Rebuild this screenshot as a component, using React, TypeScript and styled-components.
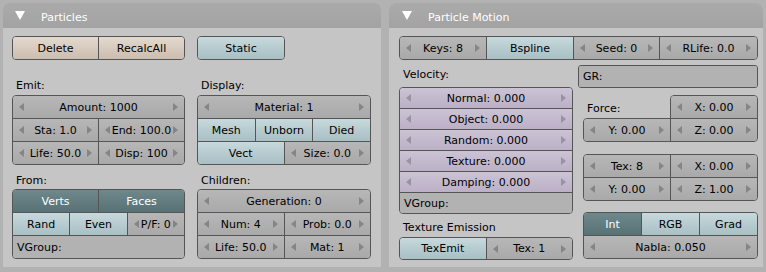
import React from 'react';
import styled, { createGlobalStyle, css } from 'styled-components';

const GlobalStyle = createGlobalStyle`
  html, body { margin: 0; padding: 0; background: #b2b2b2; }
  body {
    font-family: "DejaVu Sans", "Bitstream Vera Sans", Verdana, sans-serif;
    font-size: 11px;
    color: #000;
  }
  * { box-sizing: border-box; }
`;

const Page = styled.div`
  display: flex;
  gap: 8px;
  padding: 3px 3px 0 3px;
  width: 766px;
  height: 272px;
`;

const Panel = styled.section<{ $w: number }>`
  width: ${p => p.$w}px;
  height: 264px;
  background: #c5c5c5;
  border-radius: 6px 6px 0 0;
  display: flex;
  flex-direction: column;
  overflow: hidden;
`;

const Header = styled.header<{ $pad: number }>`
  height: 25px;
  flex: none;
  background: linear-gradient(#aaaaaa, #a3a3a3);
  display: flex;
  align-items: center;
  gap: 16px;
  padding-left: ${p => p.$pad}px;
  color: #fff;
`;

const HeaderTitle = styled.span`
  padding-top: 3px;
`;

const Tri = () => (
  <svg width="10" height="9" viewBox="0 0 10 9">
    <polygon points="0,0 10,0 5,9" fill="#ffffff" />
  </svg>
);

const Body1 = styled.div`
  display: flex;
  gap: 12px;
  padding: 8px 10px 0 9px;
`;

const Body2 = styled.div`
  display: flex;
  flex-direction: column;
  padding: 8px 5px 0 10px;
`;

const Columns = styled.div`
  display: flex;
  gap: 5px;
`;

const Column = styled.div<{ $w: number; $pt?: number }>`
  width: ${p => p.$w}px;
  display: flex;
  flex-direction: column;
  padding-top: ${p => p.$pt ?? 0}px;
`;

const SectionLabel = styled.div<{ $h: number; $pb: number }>`
  height: ${p => p.$h}px;
  display: flex;
  align-items: flex-end;
  padding-left: 4px;
  padding-bottom: ${p => p.$pb}px;
  white-space: nowrap;
`;

const Group = styled.div<{ $w?: number; $mt?: number; $ml?: number; $radius?: string }>`
  display: flex;
  flex-direction: column;
  border: 1px solid #555555;
  border-radius: ${p => p.$radius ?? '4px'};
  overflow: hidden;
  ${p => (p.$w ? `width: ${p.$w}px;` : '')}
  margin-top: ${p => p.$mt ?? 0}px;
  margin-left: ${p => p.$ml ?? 0}px;
`;

const Row = styled.div`
  display: flex;
  & + & {
    border-top: 1px solid #555555;
  }
`;

type Variant = 'num' | 'peach' | 'toggle' | 'active' | 'lav' | 'text';

const variants: Record<Variant, ReturnType<typeof css>> = {
  num: css`background: linear-gradient(#b7b7b7, #a9a9a9);`,
  peach: css`background: linear-gradient(#e4d9ce, #cbbdaf);`,
  toggle: css`background: linear-gradient(#c7d9dd, #a8bfc3);`,
  active: css`background: linear-gradient(#6e888c, #587175); color: #fff;`,
  lav: css`background: linear-gradient(#ccc3d5, #bbb0c6);`,
  text: css`background: #b2b2b2; justify-content: flex-start; padding-left: 4px;`,
};

const Cell = styled.div<{ $v: Variant; $h: number; $w?: number }>`
  ${p => (p.$w ? `flex: 0 0 ${p.$w}px;` : 'flex: 1 1 0;')}
  min-width: 0;
  height: ${p => p.$h}px;
  display: flex;
  align-items: center;
  justify-content: center;
  white-space: nowrap;
  overflow: hidden;
  ${p => variants[p.$v]}
  & + & {
    border-left: 1px solid #555555;
  }
`;

const Arrow = styled.span<{ $dir: 'l' | 'r'; $lav?: boolean }>`
  flex: none;
  width: 0;
  height: 0;
  border-top: 4px solid transparent;
  border-bottom: 4px solid transparent;
  ${p =>
    p.$dir === 'l'
      ? `border-right: 5px solid ${p.$lav ? '#9b91a4' : '#858585'}; margin-left: 6px;`
      : `border-left: 5px solid ${p.$lav ? '#9b91a4' : '#858585'}; margin-right: 6px;`}
`;

const NumText = styled.span`
  flex: 1 1 auto;
  text-align: center;
  white-space: nowrap;
`;

const Num: React.FC<{ label: string; h?: number; w?: number; lav?: boolean }> = ({ label, h = 22, w, lav }) => (
  <Cell $v={lav ? 'lav' : 'num'} $h={h} $w={w}>
    <Arrow $dir="l" $lav={lav} />
    <NumText>{label}</NumText>
    <Arrow $dir="r" $lav={lav} />
  </Cell>
);

const Btn: React.FC<{ label: string; v: Variant; h?: number; w?: number }> = ({ label, v, h = 22, w }) => (
  <Cell $v={v} $h={h} $w={w}>
    {label}
  </Cell>
);

const ForceTop = styled.div`
  display: flex;
  margin-left: 5px;
  margin-top: 7px;
`;

const ForceLabel = styled.div`
  flex: 1;
  display: flex;
  align-items: center;
  padding-left: 4px;
  padding-top: 3px;
`;

export default function App() {
  return (
    <>
      <GlobalStyle />
      <Page>
        <Panel $w={378}>
          <Header $pad={12}>
            <Tri />
            <HeaderTitle>Particles</HeaderTitle>
          </Header>
          <Body1>
            <Column $w={173}>
              <Group>
                <Row>
                  <Btn label="Delete" v="peach" />
                  <Btn label="RecalcAll" v="peach" />
                </Row>
              </Group>
              <SectionLabel $h={35} $pb={3}>Emit:</SectionLabel>
              <Group>
                <Row>
                  <Num label="Amount: 1000" />
                </Row>
                <Row>
                  <Num label="Sta: 1.0" />
                  <Num label="End: 100.0" />
                </Row>
                <Row>
                  <Num label="Life: 50.0" />
                  <Num label="Disp: 100" />
                </Row>
              </Group>
              <SectionLabel $h={24} $pb={2}>From:</SectionLabel>
              <Group>
                <Row>
                  <Btn label="Verts" v="active" />
                  <Btn label="Faces" v="active" />
                </Row>
                <Row>
                  <Btn label="Rand" v="toggle" />
                  <Btn label="Even" v="toggle" />
                  <Num label="P/F: 0" />
                </Row>
                <Row>
                  <Btn label="VGroup:" v="text" />
                </Row>
              </Group>
            </Column>
            <Column $w={174}>
              <Group $w={88}>
                <Row>
                  <Btn label="Static" v="toggle" />
                </Row>
              </Group>
              <SectionLabel $h={35} $pb={3}>Display:</SectionLabel>
              <Group>
                <Row>
                  <Num label="Material: 1" />
                </Row>
                <Row>
                  <Btn label="Mesh" v="toggle" />
                  <Btn label="Unborn" v="toggle" />
                  <Btn label="Died" v="toggle" />
                </Row>
                <Row>
                  <Btn label="Vect" v="toggle" />
                  <Num label="Size: 0.0" />
                </Row>
              </Group>
              <SectionLabel $h={24} $pb={2}>Children:</SectionLabel>
              <Group>
                <Row>
                  <Num label="Generation: 0" />
                </Row>
                <Row>
                  <Num label="Num: 4" />
                  <Num label="Prob: 0.0" />
                </Row>
                <Row>
                  <Num label="Life: 50.0" />
                  <Num label="Mat: 1" />
                </Row>
              </Group>
            </Column>
          </Body1>
        </Panel>

        <Panel $w={374}>
          <Header $pad={13}>
            <Tri />
            <HeaderTitle>Particle Motion</HeaderTitle>
          </Header>
          <Body2>
            <Group $w={359}>
              <Row>
                <Num label="Keys: 8" w={86} />
                <Btn label="Bspline" v="toggle" w={87} />
                <Num label="Seed: 0" w={86} />
                <Num label="RLife: 0.0" />
              </Row>
            </Group>
            <Columns>
              <Column $w={174}>
                <SectionLabel $h={27} $pb={6}>Velocity:</SectionLabel>
                <Group>
                  <Row><Num lav h={20} label="Normal: 0.000" /></Row>
                  <Row><Num lav h={20} label="Object: 0.000" /></Row>
                  <Row><Num lav h={20} label="Random: 0.000" /></Row>
                  <Row><Num lav h={20} label="Texture: 0.000" /></Row>
                  <Row><Num lav h={20} label="Damping: 0.000" /></Row>
                  <Row><Btn label="VGroup:" v="text" h={20} /></Row>
                </Group>
                <SectionLabel $h={23} $pb={3}>Texture Emission</SectionLabel>
                <Group>
                  <Row>
                    <Btn label="TexEmit" v="toggle" h={21} />
                    <Num label="Tex: 1" h={21} />
                  </Row>
                </Group>
              </Column>
              <Column $w={180} $pt={5}>
                <Group $radius="3px">
                  <Row>
                    <Btn label="GR:" v="text" h={21} />
                  </Row>
                </Group>
                <ForceTop>
                  <ForceLabel>Force:</ForceLabel>
                  <Group $w={88} $radius="4px 4px 0 0">
                    <Row>
                      <Num label="X: 0.00" h={22} />
                    </Row>
                  </Group>
                </ForceTop>
                <Group $ml={5} $mt={-1} $w={175} $radius="4px 0 4px 4px">
                  <Row>
                    <Num label="Y: 0.00" />
                    <Num label="Z: 0.00" />
                  </Row>
                </Group>
                <Group $ml={5} $mt={12} $w={175}>
                  <Row>
                    <Num label="Tex: 8" />
                    <Num label="X: 0.00" />
                  </Row>
                  <Row>
                    <Num label="Y: 0.00" />
                    <Num label="Z: 1.00" />
                  </Row>
                </Group>
                <Group $ml={5} $mt={11} $w={175}>
                  <Row>
                    <Btn label="Int" v="active" />
                    <Btn label="RGB" v="toggle" />
                    <Btn label="Grad" v="toggle" />
                  </Row>
                  <Row>
                    <Num label="Nabla: 0.050" />
                  </Row>
                </Group>
              </Column>
            </Columns>
          </Body2>
        </Panel>
      </Page>
    </>
  );
}
